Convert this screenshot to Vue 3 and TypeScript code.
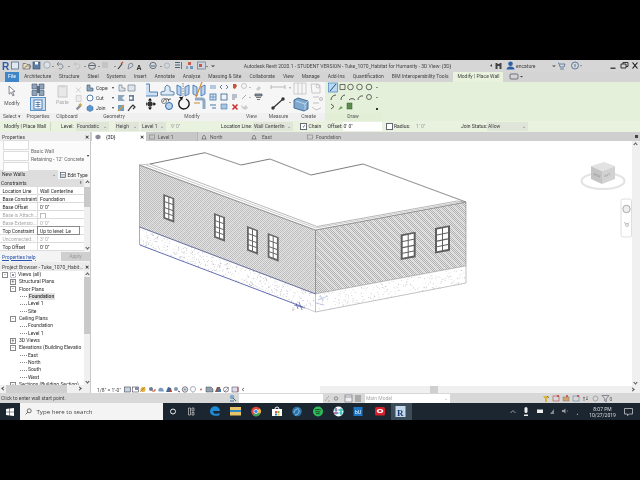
<script setup lang="ts">
const tabs = ['Architecture', 'Structure', 'Steel', 'Systems', 'Insert', 'Annotate', 'Analyze', 'Massing & Site', 'Collaborate', 'View', 'Manage', 'Add-Ins', 'Quantification', 'BIM Interoperability Tools'];

const docTabs = [
  { name: 'Level 1', cls: 'w-level' },
  { name: 'North', cls: 'w-north' },
  { name: 'East', cls: 'w-east' },
  { name: 'Foundation', cls: 'w-found' },
];

const propRows = [
  { label: 'Location Line', value: 'Wall Centerline' },
  { label: 'Base Constraint', value: 'Foundation' },
  { label: 'Base Offset', value: "0' 0\"" },
  { label: 'Base is Attach...', value: '', off: true, check: true },
  { label: 'Base Extensio...', value: "0' 0\"", off: true },
  { label: 'Top Constraint', value: 'Up to level: Le', active: true },
  { label: 'Unconnected...', value: "3' 0\"", off: true },
  { label: 'Top Offset', value: "0' 0\"" },
];

const tree = [
  { name: 'Views (all)', level: 0, box: '-', views: true },
  { name: 'Structural Plans', level: 1, box: '+' },
  { name: 'Floor Plans', level: 1, box: '-' },
  { name: 'Foundation', level: 2, current: true },
  { name: 'Level 1', level: 2 },
  { name: 'Site', level: 2 },
  { name: 'Ceiling Plans', level: 1, box: '-' },
  { name: 'Foundation', level: 2 },
  { name: 'Level 1', level: 2 },
  { name: '3D Views', level: 1, box: '+' },
  { name: 'Elevations (Building Elevatio', level: 1, box: '-' },
  { name: 'East', level: 2 },
  { name: 'North', level: 2 },
  { name: 'South', level: 2 },
  { name: 'West', level: 2 },
  { name: 'Sections (Building Section)', level: 1, box: '-' },
];

// fixed seed so the concrete stipple is the same on every load
let seed = 4711;
function rnd() {
  seed = (seed * 16807) % 2147483647;
  return seed / 2147483647;
}

const dots: { x: number; y: number; o: number }[] = [];
for (let i = 0; i < 420; i++) {
  const t = rnd();
  const v = rnd();
  dots.push({ x: 140 + t * 175, y: 227.5 + t * 67 + v * 17, o: 0.25 + rnd() * 0.6 });
}
for (let i = 0; i < 240; i++) {
  const t = rnd();
  const v = rnd();
  dots.push({ x: 316 + t * 150, y: 294.5 - t * 28 + v * 17, o: 0.2 + rnd() * 0.5 });
}

// light diagonal streaks over the brick hatch, clipped to each wall
const streaksL: number[] = [];
for (let c = 270; c < 620; c += 5) streaksL.push(c);
const streaksR: number[] = [];
for (let c = 0; c < 280; c += 8) streaksR.push(c);

const leftWindows = [
  { x: 163.3, y: 194 },
  { x: 214, y: 213 },
  { x: 247, y: 226 },
  { x: 267.7, y: 233 },
];
const rightWindows = [
  { x: 400.7, y: 234.5 },
  { x: 435, y: 228 },
];
</script>

<template>
  <div class="screen">
    <div class="letterbox"></div>
    <div class="revit">
      <!-- title bar -->
      <div class="titlebar">
        <svg class="qat" width="225" height="12" viewBox="0 60 225 12">
          <text x="2" y="69.5" class="logo">R</text>
          <rect x="11.5" y="62" width="7" height="7" fill="#dfe8f0" stroke="#59728c" stroke-width=".8" />
          <path d="M23 63.5h3l1 1h3v4.500h-7zM24 69l2-3h5l-2 3" fill="#e8dfb8" stroke="#667" stroke-width=".7" />
          <rect x="33" y="62" width="7" height="7" fill="#5f7ea3" stroke="#2f4c70" stroke-width=".6" />
          <rect x="35" y="62" width="3" height="2.500" fill="#fff" />
          <circle cx="47" cy="65" r="3.200" fill="#dfe3e8" stroke="#8a97a5" stroke-width=".7" />
          <path d="M52 66l1 1 1-1z M68 66l1 1 1-1z M84 66l1 1 1-1z M98 66l1 1 1-1zM114 66l1 1 1-1zM160 66l1 1 1-1z" fill="#444" />
          <path d="M57 64h3a2.500 2.500 0 1 1-1 4.500M57 64l2-2M57 64l2 2" fill="none" stroke="#6b7785" stroke-width=".8" />
          <path d="M74 64h3a2.500 2.500 0 1 1-1 4.500M74 64l2-2M74 64l2 2" fill="none" stroke="#bbb" stroke-width=".8" />
          <ellipse cx="92" cy="66" rx="3.500" ry="3.300" fill="none" stroke="#5b6570" stroke-width=".9" />
          <path d="M88.500 65.500h7" stroke="#5b6570" stroke-width="1" />
          <path d="M102 63h6M102 65h6M102 67h6" stroke="#aaa" stroke-width=".8" />
          <path d="M118 69l4-5" stroke="#333" stroke-width="1.100" /><path d="M121 64l2-2" stroke="#b8482f" stroke-width="1.200" />
          <path d="M128 69l1-5 3-1 1 3z" fill="none" stroke="#6e7b8a" stroke-width=".8" />
          <text x="136.500" y="69.500" class="qat-a">A</text>
          <circle cx="153" cy="65.500" r="3.200" fill="none" stroke="#66727f" stroke-width="1" /><rect x="150" y="65" width="6" height="2" fill="#8fa1b3" />
          <circle cx="167" cy="65.500" r="2.600" fill="none" stroke="#9fb0c2" stroke-width=".9" />
          <path d="M175 62.500h5M175 65h5M175 67.500h5" stroke="#49617b" stroke-width="1" /><path d="M181 62h1v7h-1z" fill="#b45a42" />
          <path d="M188 62h3v3h-3z" fill="#c95b48" /><path d="M190 66h3v3h-3z" fill="#6d98bf" /><path d="M186 66h2v3h-2z" fill="#90a4b6" />
          <rect x="197.500" y="62" width="8" height="7" fill="#ccd5de" stroke="#6a7886" stroke-width=".7" /><rect x="199" y="64" width="3" height="3" fill="#c35a4a" />
          <path d="M206 66l1 1 1-1zM211 65.500l2 1.500 2-1.500z" fill="#333" />
        </svg>
        <div class="title-text">Autodesk Revit 2020.1 - STUDENT VERSION - Tuke_1070_Habitat for Humanity - 3D View: {3D}</div>
        <svg class="title-right" width="150" height="12" viewBox="490 60 150 12">
          <path d="M490 65.500l2-1.500v3z" fill="#444" />
          <path d="M495.500 63h2v1h2v-1h2v6h-2v-3h-2v3h-2z" fill="#444" />
          <circle cx="510.500" cy="63.800" r="2.300" fill="#2d5fa8" /><path d="M506.500 69.500c0-4 8-4 8 0z" fill="#2d5fa8" />
          <text x="516" y="67.500" class="user">encature</text>
          <path d="M552 65.500l2 1.500 2-1.500zM580 65.500l1 1 1-1z" fill="#444" />
          <path d="M558 63h1l1 4h4l1-3h-5M560 69h4" fill="none" stroke="#4f6f96" stroke-width=".8" />
          <circle cx="575" cy="65.500" r="3.500" fill="none" stroke="#4f6f96" stroke-width=".9" /><path d="M575 64v3" stroke="#4f6f96" stroke-width=".9" />
          <path d="M610.500 68.200h5" stroke="#222" stroke-width="1.200" />
          <path d="M621 64h5v4h-5zM623 64v-1.500h5v4h-2" fill="none" stroke="#222" stroke-width=".9" />
          <path d="M632.500 62.500l5 6M637.500 62.500l-5 6" stroke="#111" stroke-width="1.100" />
        </svg>
      </div>

      <!-- ribbon tabs -->
      <div class="tabrow">
        <div class="file-tab">File</div>
        <span v-for="t in tabs" :key="t" class="tab">{{ t }}</span>
        <div class="ctx-tab">Modify | Place Wall</div>
        <svg width="14" height="9" viewBox="0 0 14 9" class="tab-extra">
          <rect x="1" y="2" width="8" height="5" rx="1" fill="none" stroke="#556" stroke-width=".8" />
          <path d="M11 4l1.500 1.500L14 4z" fill="#444" />
        </svg>
      </div>

      <!-- ribbon -->
      <div class="ribbon">
        <div class="panel w-select">
          <div class="panel-body col">
            <svg width="12" height="12" viewBox="0 0 12 12"><path d="M3 1l6 5.500-2.500.3 1.600 3.400-1.300.6-1.600-3.400-2 1.700z" fill="#fff" stroke="#667" stroke-width=".8" /></svg>
            <span class="big-label">Modify</span>
          </div>
          <div class="panel-label">Select ▾</div>
        </div>
        <div class="panel w-props">
          <div class="panel-body col">
            <svg width="14" height="13" viewBox="0 0 14 13">
              <path d="M1 1h5v5H1zM8 1h5v5H8zM1 7.500h5v5H1zM8 7.500h5v5H8z" fill="#90a4b8" stroke="#3e5670" stroke-width=".6" />
              <path d="M6 3h3v7H6z" fill="#586a7c" />
            </svg>
            <div class="prop-btn">
              <svg width="10" height="11" viewBox="0 0 10 11"><rect x="1" y="1" width="8" height="9" fill="#fff" stroke="#2f5f98" stroke-width=".8" /><path d="M2.500 3.500h5M2.500 5.500h5M2.500 7.500h5M5 2.500v6" stroke="#2f5f98" stroke-width=".7" /></svg>
            </div>
          </div>
          <div class="panel-label">Properties</div>
        </div>
        <div class="panel w-clip">
          <div class="panel-body row">
            <div class="col paste">
              <svg width="11" height="14" viewBox="0 0 11 14"><rect x="1" y="2" width="9" height="11" fill="#e8e8e8" stroke="#c8c8c8" /><rect x="3" y="1" width="5" height="2.500" fill="#d4d4d4" /></svg>
              <span class="big-label off">Paste</span>
            </div>
            <svg width="9" height="29" viewBox="0 0 9 29">
              <path d="M1 1l6 6M7 1l-6 6" stroke="#c8c8c8" /><rect x="1.500" y="11" width="6" height="7" fill="#eee" stroke="#ccc" />
              <path d="M1 27l5-5 2 2-5 5z" fill="#8a8f96" /><path d="M4 22l3-2 2 3-2 1z" fill="#c7a94f" />
            </svg>
          </div>
          <div class="panel-label">Clipboard</div>
        </div>
        <div class="panel w-geom">
          <div class="panel-body row">
            <div class="geo-list">
              <div class="geo-row"><svg width="8" height="8" viewBox="0 0 8 8"><path d="M1 1h3v3h3v3H1z" fill="#8fa6bf" stroke="#38506b" stroke-width=".6" /></svg><span>Cope</span><i>▾</i></div>
              <div class="geo-row"><svg width="8" height="8" viewBox="0 0 8 8"><rect x="1" y="1" width="6" height="6" rx="3" fill="#fff" stroke="#4d7fb3" /></svg><span>Cut</span><i>▾</i></div>
              <div class="geo-row"><svg width="8" height="8" viewBox="0 0 8 8"><path d="M1 3l3-2 3 2v3l-3 1.500L1 6z" fill="#5d96cc" stroke="#2f5f98" stroke-width=".5" /></svg><span>Join</span><i>▾</i></div>
            </div>
            <svg width="20" height="30" viewBox="115 82 20 30">
              <path d="M117 84h3v3h3v3h-6zM126 84h7v6h-7z" fill="#dfe5ea" stroke="#5b6e82" stroke-width=".6" />
              <path d="M116 94h7l-3 3 3 3h-7z" fill="#8fa6bf" /><path d="M127 94h5v6h-5z" fill="#6d8299" /><circle cx="129" cy="97" r="1.500" fill="#fff" />
              <path d="M116 104h6v6h-6z" fill="#6d9dc9" /><path d="M116 110l6-6" stroke="#d9a13b" stroke-width="1.200" /><path d="M126 110l3-4 2-2 2 2-2 2" fill="none" stroke="#333" stroke-width="1.200" />
            </svg>
          </div>
          <div class="panel-label">Geometry</div>
        </div>
        <div class="panel w-mod">
          <div class="panel-body">
            <svg width="92" height="30" viewBox="146 82 92 30">
              <path d="M145.500 84h4v8h8v4h-12z" fill="#cfe0f3" stroke="#2d6ab0" stroke-width=".8" />
              <path d="M161 95v-3l4-1v-4l2-2 3 2v4l4 1v3z" fill="#dfe9f3" stroke="#3c6f9f" stroke-width=".8" />
              <path d="M177 85l4 2v9l-4-2zM189 85l-4 2v9l4-2z" fill="#bcd3ea" stroke="#2d6ab0" stroke-width=".8" /><path d="M183 83v14" stroke="#333" stroke-width=".6" stroke-dasharray="1.500 1" />
              <path d="M193 85l4 2v9l-4-2zM205 85l-4 2v9l4-2z" fill="#bcd3ea" stroke="#2d6ab0" stroke-width=".8" /><path d="M196 97l6-15" stroke="#d98b2b" stroke-width="1.200" />
              <path d="M150 99v10M145 104h10" stroke="#111" stroke-width="1" />
              <path d="M150 98l2 2.500h-4zM150 110l2-2.500h-4zM144 104l2.500-2v4zM156 104l-2.500-2v4z" fill="#111" />
              <rect x="147.800" y="101.800" width="4.400" height="4.400" fill="#333" />
              <path d="M163 102a4 4 0 0 1 5-3M171 99l-3 .5 1 2" fill="none" stroke="#333" stroke-width=".8" />
              <circle cx="169" cy="106" r="3.500" fill="#bcd3ea" stroke="#2d6ab0" /><circle cx="164" cy="101" r="2.500" fill="none" stroke="#555" stroke-width=".7" />
              <path d="M186 99a5.200 5.200 0 1 1-5 .5" fill="none" stroke="#111" stroke-width="1.300" /><path d="M179 97l4 0-1 3.500z" fill="#111" />
              <path d="M195 99h7a2 2 0 0 1 2 2v8" fill="none" stroke="#8ea9c4" stroke-width="3" /><path d="M194 103h6" stroke="#c88c38" stroke-width="1" />
              <path d="M210 86h6M210 88h6" stroke="#6e9bc5" stroke-width="1.200" /><path d="M222 85l-2 2 2 2M226 85l2 2-2 2" fill="none" stroke="#5e7f9f" />
              <path d="M233 84h3l1 2-2 3-2-1z" fill="#c6553f" />
              <rect x="210" y="94" width="6" height="6" fill="#d5e4f3" stroke="#4678a8" stroke-width=".8" /><path d="M213 94v6M210 97h6" stroke="#4678a8" stroke-width=".6" />
              <rect x="221" y="94" width="6" height="6" fill="#eef3f8" stroke="#35618c" stroke-width=".8" />
              <path d="M232 95h5M232 97h5M232 99h3" stroke="#5d7084" stroke-width=".8" />
              <path d="M210 105h6M212 108h4" stroke="#4678a8" stroke-width="1.200" /><path d="M221 104h6v5h-6z" fill="#aac5df" stroke="#4678a8" stroke-width=".6" />
              <path d="M232.500 104.500l5 5M237.500 104.500l-5 5" stroke="#cf2b2b" stroke-width="1.500" />
            </svg>
          </div>
          <div class="panel-label">Modify</div>
        </div>
        <div class="panel w-view">
          <div class="panel-body">
            <svg width="27" height="30" viewBox="241 82 27 30">
              <circle cx="247" cy="86" r="2.500" fill="none" stroke="#bbb" stroke-width=".8" /><path d="M252 87l1 1 1-1z" fill="#888" />
              <path d="M259 89l3-3 2 2-3 3z" fill="#ccc" />
              <path d="M245 99l4-4" stroke="#aaa" stroke-width="1" /><path d="M252 97l1 1 1-1z" fill="#888" />
              <path d="M258 94h7v2h-7zM259 97.500h5M260 99.500h3" stroke="#555" stroke-width=".8" fill="#7d95ad" />
              <path d="M244 105l3 2 2-2 2 3-3 2-3-2z" fill="#ccc" />
            </svg>
          </div>
          <div class="panel-label">View</div>
        </div>
        <div class="panel w-meas">
          <div class="panel-body">
            <svg width="27" height="30" viewBox="265 82 27 30">
              <path d="M271 87h14M271 85v4M285 85v4" stroke="#aaa" stroke-width=".8" />
              <path d="M289 87.500l1 1 1-1zM289 102l1 1 1-1z" fill="#555" />
              <path d="M273 108l10-9" stroke="#333" stroke-width="1.200" /><circle cx="273" cy="108" r="1.700" fill="#333" /><circle cx="283" cy="99" r="1.700" fill="#333" />
            </svg>
          </div>
          <div class="panel-label">Measure</div>
        </div>
        <div class="panel w-create">
          <div class="panel-body">
            <svg width="33" height="30" viewBox="292 82 33 30">
              <path d="M294 83h12v11h-12zM298 83v11M302 83v11" fill="none" stroke="#c2c2c2" stroke-width=".8" />
              <path d="M311 84h6l3 3v6h-8z" fill="none" stroke="#bdbdbd" stroke-width=".8" /><circle cx="318" cy="86" r="2" fill="none" stroke="#bbb" stroke-width=".8" />
              <path d="M294 100l4-2 10 3v8l-4 2-10-3z" fill="#7fa8cf" stroke="#2a5886" stroke-width=".8" />
              <path d="M296 101l9 3v6M305 104l3-3" fill="none" stroke="#d9e7f3" stroke-width=".7" />
              <path d="M313 97h6M313 103h6M312 107l4 3 5-2" fill="none" stroke="#bbb" stroke-width=".9" /><circle cx="321" cy="99" r="1.500" fill="none" stroke="#bbb" />
            </svg>
          </div>
          <div class="panel-label">Create</div>
        </div>
        <div class="panel w-draw green">
          <div class="panel-body">
            <svg width="56" height="30" viewBox="325 82 56 30">
              <rect x="328.500" y="83" width="9" height="9" fill="#bcd9f4" stroke="#3f82c5" stroke-width=".7" />
              <path d="M330 91l6-7" stroke="#1f3f63" stroke-width=".9" />
              <path d="M340 84.500h5v5h-5z" fill="none" stroke="#333" stroke-width=".7" />
              <circle cx="350.500" cy="87" r="2.800" fill="none" stroke="#333" stroke-width=".7" />
              <circle cx="359.500" cy="87" r="2.800" fill="none" stroke="#333" stroke-width=".7" /><circle cx="369" cy="87" r="2.800" fill="none" stroke="#333" stroke-width=".7" />
              <path d="M376 87l1 1 1-1zM376 97l1 1 1-1z" fill="#333" />
              <path d="M331 100a5 5 0 0 1 5-5M341 100a5 5 0 0 1 4-5M349 100a4 4 0 0 1 6 0M358 100a4 4 0 0 1 5-4" fill="none" stroke="#333" stroke-width=".8" />
              <circle cx="369" cy="97" r="2.500" fill="none" stroke="#333" stroke-width=".7" />
              <path d="M331 104l3 2.500-3 2.500" fill="none" stroke="#333" stroke-width=".8" />
              <path d="M338 110l3-4 2 2z" fill="#6fa14f" /><rect x="347" y="103" width="5" height="6" fill="#5c8d4d" stroke="#2e5f2e" stroke-width=".5" />
              <path d="M376 108h2v2h-2z" fill="#333" />
            </svg>
          </div>
          <div class="panel-label">Draw</div>
        </div>
        <div class="green-rest"></div>
      </div>

      <!-- options bar -->
      <div class="optbar">
        <span class="o-mode">Modify | Place Wall</span>
        <span class="o-sep"></span>
        <span class="o-level">Level:</span>
        <span class="o-select s-found">Foundatic<i>⌄</i></span>
        <span class="o-select s-heigh">Heigh<i>⌄</i></span>
        <span class="o-select s-lvl">Level 1<i>⌄</i></span>
        <span class="o-off o-height">9' 0"</span>
        <span class="o-loc">Location Line:</span>
        <span class="o-select s-loc">Wall Centerlin<i>⌄</i></span>
        <span class="o-check c-chain">✓</span><span class="o-chain">Chain</span>
        <span class="o-offset">Offset:</span>
        <span class="o-input">0' 0"</span>
        <span class="o-check c-radius"></span><span class="o-radius">Radius:</span>
        <span class="o-off o-r">1' 0"</span>
        <span class="o-join">Join Status:</span>
        <span class="o-select s-allow">Allow<i>⌄</i></span>
      </div>

      <!-- main area -->
      <div class="work">
        <aside class="side">
          <div class="pane-head"><span>Properties</span><b>✕</b></div>
          <div class="type-sel">
            <div class="swatches"><span></span><span></span><span></span></div>
            <div class="type-name"><div>Basic Wall</div><div>Retaining - 12" Concrete</div></div>
            <i class="type-caret"></i>
          </div>
          <div class="new-row">
            <span class="new-sel">New Walls<i>⌄</i></span>
            <span class="edit-type">
              <svg width="6" height="6" viewBox="0 0 6 6"><rect x=".5" y=".5" width="5" height="5" fill="#fff" stroke="#456" stroke-width=".7" /><path d="M1 2.500h4M1 4h4" stroke="#456" stroke-width=".5" /></svg>
              Edit Type
            </span>
          </div>
          <div class="prop-wrap">
            <div class="prop-table">
              <div class="prop-head"><span>Constraints</span><em>⇞</em></div>
              <div v-for="r in propRows" :key="r.label" class="prop-row" :class="{ off: r.off, active: r.active }">
                <span class="p-l">{{ r.label }}</span>
                <span class="p-v"><i v-if="r.check" class="p-check"></i>{{ r.value }}</span>
              </div>
            </div>
            <div class="vscroll prop-scroll"><i class="up"></i><b></b><i class="down"></i></div>
          </div>
          <div class="help-row">
            <a>Properties help</a>
            <span class="apply">Apply</span>
          </div>
          <div class="pane-head"><span>Project Browser - Tuke_1070_Habit...</span><b>✕</b></div>
          <div class="browser">
            <div class="tree">
              <div v-for="(n, i) in tree" :key="i" class="node" :class="'lv' + n.level">
                <span v-if="n.box" class="box">{{ n.box }}</span>
                <span v-else class="leafline"></span>
                <svg v-if="n.views" width="6" height="6" viewBox="0 0 6 6" class="views-ico"><rect x=".5" y=".5" width="5" height="5" fill="none" stroke="#667" stroke-width=".6" stroke-dasharray="1 .7" /><circle cx="3" cy="3" r="1" fill="#667" /></svg>
                <span class="n-txt" :class="{ cur: n.current }">{{ n.name }}</span>
              </div>
            </div>
            <div class="vscroll tree-scroll"><i class="up"></i><b></b><i class="down"></i></div>
          </div>
          <div class="hscroll side-h"><i class="left"></i><b></b><i class="right"></i></div>
        </aside>

        <section class="doc">
          <div class="doctabs">
            <div class="doc-tab current">
              <svg width="6" height="6" viewBox="0 0 6 6"><path d="M3 .5l2.500 1.200v2.600L3 5.500.5 4.300V1.700z" fill="#889" /></svg>
              <span>{3D}</span><b>✕</b>
            </div>
            <div v-for="d in docTabs" :key="d.name" class="doc-tab" :class="d.cls">
              <svg width="6" height="6" viewBox="0 0 6 6">
                <rect v-if="d.name === 'Level 1' || d.name === 'Foundation'" x=".5" y="1" width="5" height="4" fill="none" stroke="#8a8a8a" stroke-width=".7" />
                <path v-else d="M.5 5h5M1.500 5V3l1.500-2 1.500 2v2" fill="none" stroke="#666" stroke-width=".7" />
              </svg>
              <span>{{ d.name }}</span>
            </div>
            <i class="tabs-menu"></i>
          </div>
          <div class="canvas-row">
            <div class="canvas">
              <svg class="model" width="541" height="245" viewBox="91 141 541 245">
                <defs>
                  <!-- pixel-aligned tile, no rotation: a rotated tile beats into wide dark bands -->
                  <pattern id="hatch-l" width="2" height="2" patternUnits="userSpaceOnUse">
                    <rect width="2" height="2" fill="#e2e2e2" />
                    <rect width="1" height="1" fill="#bcbcbc" />
                    <rect x="1" y="1" width="1" height="1" fill="#bcbcbc" />
                  </pattern>
                  <pattern id="hatch-r" width="2" height="2" patternUnits="userSpaceOnUse">
                    <rect width="2" height="2" fill="#e4e4e4" />
                    <rect width="1" height="1" fill="#b0b0b0" />
                    <rect x="1" y="1" width="1" height="1" fill="#b0b0b0" />
                  </pattern>
                  <clipPath id="clip-l"><path d="M139.500 165L315.500 230V294L139.500 227z" /></clipPath>
                  <clipPath id="clip-r"><path d="M315.500 230L466 202V266L315.500 294z" /></clipPath>
                  <g id="win-l">
                    <rect x="0" y="0" width="11" height="24.500" fill="#666" />
                    <rect x="1.800" y="1.500" width="3.200" height="5" fill="#fff" /><rect x="6" y="1.500" width="3.200" height="5" fill="#fff" />
                    <rect x="1.800" y="7.500" width="3.200" height="5" fill="#fff" /><rect x="6" y="7.500" width="3.200" height="5" fill="#fff" />
                    <rect x="1.800" y="13.500" width="3.200" height="4" fill="#fff" /><rect x="6" y="13.500" width="3.200" height="4" fill="#fff" />
                    <rect x="1.800" y="18.500" width="3.200" height="4" fill="#fff" /><rect x="6" y="18.500" width="3.200" height="4" fill="#fff" />
                  </g>
                  <g id="win-r">
                    <rect x="0" y="0" width="15" height="25.500" fill="#5f5f5f" />
                    <rect x="2" y="1.800" width="5" height="5" fill="#fff" /><rect x="8" y="1.800" width="5" height="5" fill="#fff" />
                    <rect x="2" y="7.800" width="5" height="5" fill="#fff" /><rect x="8" y="7.800" width="5" height="5" fill="#fff" />
                    <rect x="2" y="14" width="5" height="4.500" fill="#fff" /><rect x="8" y="14" width="5" height="4.500" fill="#fff" />
                    <rect x="2" y="19.500" width="5" height="4" fill="#fff" /><rect x="8" y="19.500" width="5" height="4" fill="#fff" />
                  </g>
                </defs>

                <!-- walls -->
                <path d="M139.500 165L315.500 230V294L139.500 227z" fill="url(#hatch-l)" />
                <g clip-path="url(#clip-l)">
                  <line v-for="c in streaksL" :key="c" :x1="c - 200" y1="300" :x2="c - 60" y2="160" stroke="#fff" stroke-width=".7" opacity=".3" />
                </g>
                <path d="M315.500 230L466 202V266L315.500 294z" fill="url(#hatch-r)" />
                <g clip-path="url(#clip-r)">
                  <line v-for="c in streaksR" :key="c" :x1="c + 230" y1="190" :x2="c + 340" y2="300" stroke="#fff" stroke-width="1.200" opacity=".42" />
                </g>
                <path d="M139.500 165L315.500 230V294L139.500 227zM315.500 230L466 202V266L315.500 294z" fill="none" stroke="#888" stroke-width=".6" />

                <!-- foundation -->
                <path d="M139.500 227L315.500 294V312L140 245zM315.500 294L466 266V283L315.500 312z" fill="#fff" />
                <rect v-for="(d, i) in dots" :key="i" :x="d.x" :y="d.y" width=".7" height=".7" fill="#778" :opacity="d.o" />
                <path d="M315.500 294V312L466 283V266" fill="none" stroke="#999" stroke-width=".6" />
                <path d="M139.500 227V245" stroke="#7b86b8" stroke-width=".7" />
                <path d="M139.500 227L315.500 294" stroke="#3c4a8f" stroke-width=".7" />
                <path d="M140 245L303 307" stroke="#3c4a9f" stroke-width=".8" />
                <path d="M303 307L315.500 312" stroke="#aab" stroke-width=".6" />
                <path d="M315.500 294L466 266" stroke="#aaa" stroke-width=".5" />

                <!-- roof -->
                <path d="M139.500 165L150 164L205 152.700L241 165L270 159L311 175L363 164L466 202L315.500 230z" fill="#fff" />
                <path d="M150 164L205 152.700M241 165L270 159M311 175L363 164" fill="none" stroke="#444" stroke-width=".7" />
                <path d="M205 152.700L241 165M270 159L311 175M363 164L466 202" fill="none" stroke="#999" stroke-width="1.200" />
                <path d="M139.500 165L315.500 230L466 202" fill="none" stroke="#777" stroke-width=".7" />
                <path d="M150 164L317 226.500L457 201" fill="none" stroke="#888" stroke-width=".6" />
                <path d="M146 165L316 228L462 201.500" fill="none" stroke="#aaa" stroke-width=".6" />
                <path d="M139.500 165L150 164M457 201L466 202" fill="none" stroke="#999" stroke-width=".6" />

                <!-- windows -->
                <use v-for="w in leftWindows" :key="w.x" href="#win-l" :transform="`matrix(1 .38 0 1 ${w.x} ${w.y})`" />
                <use v-for="w in rightWindows" :key="w.x" href="#win-r" :transform="`matrix(1 -.187 0 1 ${w.x} ${w.y})`" />

                <!-- wall sketch at the corner -->
                <path d="M294 305l11 3M299 302l3 8M296 303l2 6" stroke="#3c4a9f" stroke-width=".6" fill="none" />
                <path d="M292 310l3-1M293 307v4" stroke="#999" stroke-width=".4" fill="none" />
                <path d="M318 300l10-4M320 295l3 6M316 303l8 2" stroke="#a8b6dc" stroke-width=".7" fill="none" />

                <!-- view cube -->
                <ellipse cx="603" cy="181" rx="21.500" ry="8" fill="none" stroke="#e4e4e4" stroke-width="2.200" />
                <path d="M591 166l11 5v13l-11-5z" fill="#c4c4c4" />
                <path d="M602 171l13-5v13l-13 5z" fill="#d2d2d2" />
                <path d="M591 166l13-4 11 4-13 5z" fill="#e2e2e2" />
                <text x="593" y="176" class="cube-t" transform="rotate(22 596 176)">BACK</text>
                <text x="604" y="176" class="cube-t" transform="rotate(-20 608 176)">LEFT</text>

                <!-- navigation bar -->
                <rect x="621" y="199" width="10.500" height="38" rx="2" fill="#fff" stroke="#d5d5d5" stroke-width=".8" />
                <circle cx="626.500" cy="209" r="3.700" fill="#eee" stroke="#aaa" stroke-width="1" />
                <path d="M624 222l2 2M627 224.500l2-2" stroke="#999" stroke-width=".7" />
                <circle cx="627" cy="225" r="1.500" fill="none" stroke="#999" stroke-width=".6" />
              </svg>
            </div>
            <div class="vscroll main-v"><i class="up"></i><b></b><i class="down"></i></div>
          </div>
          <div class="viewbar">
            <span class="scale">1/8" = 1'-0"</span>
            <svg width="124" height="8" viewBox="122 385 124 8">
              <rect x="124.500" y="386" width="6" height="5" fill="#c7d3de" stroke="#445" stroke-width=".6" />
              <rect x="132.500" y="386" width="6" height="5" fill="#fff" stroke="#445" stroke-width=".6" /><rect x="135" y="386" width="3.500" height="3" fill="#88a" />
              <circle cx="143" cy="388.500" r="2.500" fill="#e1b23c" /><path d="M140 391l5-5" stroke="#a66a22" stroke-width=".6" />
              <circle cx="151" cy="388" r="2" fill="#6a7d92" /><path d="M152 390h3v-2" stroke="#c8492f" stroke-width="1" fill="none" />
              <path d="M158 389l2-2.500 3 1 1 3h-5z" fill="#7b9abb" />
              <path d="M166 391l2-5 3 1 1 4z" fill="#3c6a9a" /><rect x="169" y="388" width="2" height="3" fill="#b6453a" />
              <circle cx="176" cy="388" r="2" fill="#7c98b3" /><path d="M178 390l2 1" stroke="#405" stroke-width=".8" />
              <circle cx="185" cy="388.500" r="2.700" fill="none" stroke="#556" stroke-width=".8" /><rect x="183.500" y="387.500" width="3" height="2" fill="#8798a8" />
              <path d="M190.500 388a2.500 2.500 0 0 1 5 0c0 1.500-1 2-1.500 3h-2c-.5-1-1.500-1.500-1.500-3z" fill="none" stroke="#7d8a97" stroke-width=".7" />
              <circle cx="201" cy="388.500" r=".9" fill="#c55" />
              <path d="M206 386h5l2 2v3h-7z" fill="#8ea0b2" stroke="#444" stroke-width=".5" />
              <path d="M215 391l2-5h3l1 5z" fill="#8a5a4a" /><rect x="218" y="388" width="3" height="3" fill="#4d76a0" />
              <circle cx="226" cy="388.500" r="2.500" fill="none" stroke="#667" stroke-width=".8" /><path d="M224 391l5-5" stroke="#667" stroke-width=".6" />
              <rect x="232" y="386" width="6" height="5" fill="#dde" stroke="#556" stroke-width=".6" /><path d="M238 386v5" stroke="#a55" />
              <path d="M244 387l-2 1.500 2 1.500" stroke="#444" stroke-width=".7" fill="none" />
            </svg>
            <div class="hscroll main-h"><b></b><i class="right"></i></div>
          </div>
        </section>
      </div>

      <!-- status bar -->
      <div class="statusbar">
        <span class="st-msg">Click to enter wall start point.</span>
        <svg width="8" height="8" viewBox="0 0 8 8" class="st-ico"><circle cx="3" cy="3" r="2.200" fill="#7ea7c9" /><path d="M4 4l3 3M1 7h4" stroke="#3f6a8e" /></svg>
        <span class="st-box"></span>
        <svg width="40" height="9" viewBox="325 0 40 9" class="st-ico2">
          <path d="M326 7l4-5M329 7h2" stroke="#999" stroke-width=".7" />
          <circle cx="337" cy="4.500" r="1.700" fill="none" stroke="#666" stroke-width=".7" />
          <rect x="346" y="1" width="7" height="7" fill="#eee" stroke="#667" stroke-width=".6" /><path d="M346 3h7" stroke="#667" stroke-width=".6" />
          <rect x="356" y="1" width="6" height="7" fill="#aaa" />
        </svg>
        <span class="st-model">Main Model<i>⌄</i></span>
        <svg width="72" height="9" viewBox="543 0 72 9" class="st-right">
          <path d="M544 2h6l-2 3v3h-2V5z" fill="#d9b13f" /><path d="M548 2l2 2" stroke="#3a7d3a" stroke-width=".7" />
          <rect x="554" y="2" width="6" height="5" fill="none" stroke="#b86060" stroke-width=".7" /><path d="M558 1l2 2M560 1l-2 2" stroke="#c33" stroke-width=".7" />
          <rect x="564" y="3" width="6" height="4" fill="#d5a46a" stroke="#777" stroke-width=".5" /><path d="M567 1l2 2M569 1l-2 2" stroke="#c33" stroke-width=".7" />
          <rect x="574" y="2" width="6" height="5" fill="none" stroke="#7a93ab" stroke-width=".7" /><path d="M578 1l2 2M580 1l-2 2" stroke="#c33" stroke-width=".7" />
          <path d="M585 3v4M588 2v4M584 4l1-1 1 1M587 5l1 1 1-1" stroke="#555" stroke-width=".6" fill="none" />
          <circle cx="596.500" cy="4.500" r="2.500" fill="none" stroke="#999" stroke-width=".8" />
          <path d="M603 1.500h7l-2.700 3.200v3l-1.600-.8V4.700z" fill="none" stroke="#667" stroke-width=".7" />
          <text x="610.500" y="7" class="st-zero">0</text>
        </svg>
      </div>

      <!-- taskbar -->
      <div class="taskbar">
        <svg class="win" width="8" height="8" viewBox="0 0 8 8"><path d="M0 1.100l3.300-.5v3.100H0zM3.800.5L8 0v3.700H3.800zM0 4.200h3.300v3.200L0 6.900zM3.800 4.200H8V8l-4.200-.6z" fill="#fff" /></svg>
        <div class="search">
          <svg width="7" height="7" viewBox="0 0 7 7"><circle cx="4.200" cy="2.800" r="2" fill="none" stroke="#333" stroke-width=".7" /><path d="M2.800 4.200L.6 6.400" stroke="#333" stroke-width=".7" /></svg>
          <span>Type here to search</span>
        </div>
        <svg width="254" height="17" viewBox="163 403 254 17">
          <rect x="391" y="403" width="21" height="17" fill="#3d4c59" />
          <circle cx="173" cy="411.500" r="2.500" fill="none" stroke="#fff" stroke-width=".9" />
          <path d="M188.500 408h2v7h-2zM192 408h2v3h-2zM192 412.500h2v2.500h-2z" fill="none" stroke="#ccc" stroke-width=".7" />
          <path d="M210 411.500a5 5 0 0 1 10-.5h-7c0 3 4 3.500 6.500 2v2.200c-3.500 1.500-9.500 .5-9.500-3.700z" fill="#1f8ad6" />
          <rect x="230" y="407" width="11" height="8.500" fill="#e9c465" /><rect x="230" y="410" width="11" height="2" fill="#2c8ac9" />
          <circle cx="256" cy="411.500" r="4.800" fill="#e0483e" /><path d="M256 411.500l4.400 2a4.800 4.800 0 0 1-7.400 1.800z" fill="#3ba755" /><path d="M256 411.500l4.400 2A4.800 4.800 0 0 0 260 408.500z" fill="#f2c230" />
          <circle cx="256" cy="411.500" r="2.100" fill="#4285f4" stroke="#fff" stroke-width=".7" />
          <path d="M272 409h10v7h-10z" fill="#fff" /><path d="M275 409a2 2 0 0 1 4 0" fill="none" stroke="#fff" stroke-width="1" />
          <rect x="275" y="411" width="2" height="2" fill="#e8503a" /><rect x="277.500" y="411" width="2" height="2" fill="#73b043" /><rect x="275" y="413.500" width="2" height="2" fill="#1f8ad6" /><rect x="277.500" y="413.500" width="2" height="2" fill="#f2c230" />
          <circle cx="297" cy="411.500" r="4.800" fill="#2c73a8" /><path d="M294 413a4 4 0 0 1 5-4M295 415a4 4 0 0 0 4-5" fill="none" stroke="#a8d4f0" stroke-width=".8" />
          <circle cx="318" cy="411.500" r="5" fill="#2ebd59" /><path d="M315 410c2-.7 4-.7 6 .2M315.500 412c1.500-.5 3.300-.5 4.700.2M316 413.700c1.200-.3 2.500-.3 3.700.2" fill="none" stroke="#111" stroke-width=".7" />
          <circle cx="338.500" cy="411.500" r="5" fill="#fff" /><path d="M336 408v7M341 408v7M334 410h9M334 413h9" stroke="#36c5f0" stroke-width="1" /><path d="M336 408v3.500M334 413h4" stroke="#e01e5a" stroke-width="1" /><path d="M341 411v4M339 410h4" stroke="#2eb67d" stroke-width="1" />
          <rect x="353.500" y="407" width="9" height="9" fill="#1b74c4" /><text x="355" y="413.500" class="t-bu">bU</text>
          <rect x="375" y="407" width="10" height="8.500" rx="1.500" fill="#d7202a" /><ellipse cx="380" cy="411" rx="3.200" ry="2" fill="#fff" /><ellipse cx="380" cy="411" rx="1.600" ry="1" fill="#d7202a" />
          <rect x="395.500" y="406" width="10" height="11" fill="#c4d9ec" /><text x="397" y="415.500" class="t-r">R</text>
        </svg>
        <svg class="tray" width="70" height="17" viewBox="508 403 70 17">
          <path d="M510.500 413l2.500-2.500 2.500 2.500" fill="none" stroke="#ccc" stroke-width=".7" />
          <rect x="524.500" y="407" width="3" height="6" rx="1.500" fill="#eee" /><path d="M524 414.500h4v1.500h-4z" fill="#eee" />
          <rect x="537" y="409.500" width="6" height="3.500" fill="#eee" />
          <path d="M550 414l4-5v5z" fill="#888" />
          <path d="M562 410h1.500l2-1.500v5l-2-1.500H562z" fill="#999" /><path d="M567 410l1 1-1 1" stroke="#999" stroke-width=".4" fill="none" />
          <path d="M577 415l2-2.500M578 410l2-2 3 3-2 2z" fill="none" stroke="#ccc" stroke-width=".8" />
        </svg>
        <div class="clock"><span>8:07 PM</span><span>10/27/2019</span></div>
        <svg class="notif" width="9" height="8" viewBox="0 0 9 8"><path d="M.5.500h8v5.500h-3l-2 1.500V6h-3z" fill="none" stroke="#ddd" stroke-width=".7" /></svg>
      </div>
    </div>
    <div class="letterbox bottom"></div>
  </div>
</template>

<style>
html, body { margin: 0; background: #000; overflow: hidden; }
</style>

<style scoped>
.screen {
  width: 640px;
  height: 480px;
  background: #000;
  display: flex;
  flex-direction: column;
  overflow: hidden;
  font-family: Roboto, "Liberation Sans", sans-serif;
  font-size: 5px;
  color: #2c2c2c;
}
.letterbox { height: 60px; flex: none; background: #000; }
.revit { height: 360px; flex: none; display: flex; flex-direction: column; background: #f0f0f0; filter: blur(.32px); }

/* title bar */
.titlebar { height: 12px; flex: none; background: #d6d6d6; display: flex; align-items: center; }
.qat { flex: none; }
.logo { font: bold 10px "Liberation Sans", sans-serif; fill: #2a5ea8; }
.qat-a { font: bold 7px "Liberation Sans", sans-serif; fill: #333; }
.user { font-size: 5px; fill: #444; }
.title-text { width: 245px; text-align: center; white-space: nowrap; color: #444; flex: none; }
.title-right { flex: none; margin-left: 20px; }

/* tabs */
.tabrow { height: 9.500px; flex: none; background: #d4d4d4; display: flex; align-items: stretch; padding-left: 5px; gap: 8px; white-space: nowrap; color: #444; line-height: 9.500px; }
.file-tab { width: 14px; background: #3f86c9; color: #fff; text-align: center; margin-right: -3px; }
.tab { flex: none; }
.ctx-tab { background: #e8f2dd; width: 50px; text-align: center; margin-left: -3px; flex: none; }
.tab-extra { align-self: center; margin-left: -2px; }

/* ribbon */
.ribbon { height: 39px; flex: none; background: #f6f6f6; display: flex; }
.panel { display: flex; flex-direction: column; flex: none; }
.panel-body { flex: 1; min-height: 0; overflow: hidden; }
.panel-label { height: 8px; line-height: 7px; text-align: center; color: #555; background: #f0f0f0; white-space: nowrap; }
.col { display: flex; flex-direction: column; align-items: center; }
.row { display: flex; }
.w-select { width: 24px; }
.w-select .col { padding-top: 3px; gap: 3px; }
.big-label { color: #555; }
.big-label.off { color: #aaa; }
.w-props { width: 28px; }
.w-props .col { padding-top: 1.500px; gap: 1px; }
.prop-btn { width: 16px; height: 14px; background: #c9def5; border: 1px solid #5b93cd; box-sizing: border-box; display: flex; align-items: center; justify-content: center; }
.w-clip { width: 30px; }
.w-clip .row { padding: 2px 0 0 4px; gap: 6px; }
.paste { gap: 1px; }
.w-geom { width: 64px; }
.w-geom .row { padding: 1px 0 0 4px; gap: 3px; }
.geo-list { width: 28px; display: flex; flex-direction: column; }
.geo-row { height: 10px; display: flex; align-items: center; gap: 2px; color: #333; }
.geo-row i { font-style: normal; font-size: 4px; margin-left: auto; }
.w-mod { width: 92px; }
.w-view { width: 27px; }
.w-meas { width: 27px; }
.w-create { width: 33px; }
.w-draw { width: 56px; }
.green .panel-body, .green-rest { background: #e4f0d9; }
.green .panel-label { background: #e2eed6; }
.green-rest { flex: 1; }

/* options bar */
.optbar { height: 11.500px; flex: none; background: #e9f1df; display: flex; align-items: center; white-space: nowrap; color: #333; }
.optbar > span { flex: none; }
.o-mode { width: 50px; padding-left: 4px; box-sizing: border-box; }
.o-sep { width: 1px; height: 9px; background: #cfd8c6; margin-right: 6px; }
.o-level { width: 15px; margin-left: 4px; }
.o-select { height: 9px; line-height: 9px; background: #dfe5d8; padding-left: 1px; box-sizing: border-box; display: flex; justify-content: space-between; color: #444; }
.o-select i { font-style: normal; margin-right: 2px; color: #777; }
.s-found { width: 33px; }
.s-heigh { width: 24px; margin-left: 6px; }
.s-lvl { width: 25px; margin-left: 2px; }
.o-off { color: #9a9a9a; }
.o-height { width: 40px; margin-left: 5px; }
.o-loc { width: 32px; margin-left: 10px; }
.s-loc { width: 40px; }
.o-check { width: 5px; height: 5px; line-height: 5px; font-size: 5px; border: .7px solid #667; background: #fff; text-align: center; box-sizing: content-box; overflow: hidden; }
.c-chain { margin-left: 7px; }
.o-chain { width: 16px; margin-left: 1.500px; }
.o-offset { width: 15px; margin-left: 3px; }
.o-input { width: 39px; height: 9px; line-height: 9px; background: #fff; padding-left: 1px; box-sizing: border-box; }
.c-radius { margin-left: 4px; }
.o-radius { width: 21px; margin-left: 1.500px; }
.o-r { width: 45px; margin-left: 1px; }
.o-join { width: 26px; }
.s-allow { width: 41px; }

/* work area */
.work { flex: 1; min-height: 0; display: flex; }
.side { width: 91px; flex: none; display: flex; flex-direction: column; background: #f2f2f2; border-right: 1px solid #c9c9c9; box-sizing: border-box; white-space: nowrap; }
.pane-head { height: 9px; flex: none; display: flex; justify-content: space-between; align-items: center; padding: 0 1px 0 2px; background: #ececec; color: #444; }
.pane-head b { font-size: 5px; color: #222; }
.type-sel { height: 29px; flex: none; display: flex; align-items: center; background: #fbfbfb; position: relative; }
.swatches { width: 26px; margin-left: 3px; display: flex; flex-direction: column; gap: 1px; flex: none; }
.swatches span { height: 8px; background: #fff; border: .5px solid #ddd; }
.type-name { margin-left: 2px; color: #666; line-height: 7.200px; }
.type-caret { position: absolute; right: 1px; top: 14px; border: 1.500px solid transparent; border-top: 2px solid #222; }
.new-row { height: 9px; flex: none; display: flex; align-items: center; background: #f6f6f6; }
.new-sel { width: 58px; height: 9px; line-height: 9px; background: #dddddd; padding-left: 2px; box-sizing: border-box; display: flex; justify-content: space-between; color: #333; }
.new-sel i { font-style: normal; margin-right: 2px; color: #666; }
.edit-type { margin-left: 2px; display: flex; align-items: center; gap: 1.500px; }
.prop-wrap { height: 72px; flex: none; display: flex; overflow: hidden; }
.prop-table { flex: 1; min-width: 0; background: #fff; }
.prop-head { height: 8px; background: #dedede; line-height: 8px; padding: 0 2px 0 1px; display: flex; justify-content: space-between; color: #333; }
.prop-head em { font-style: normal; color: #555; font-size: 4px; }
.prop-row { height: 8px; line-height: 8px; display: grid; grid-template-columns: 38px 1fr; border-bottom: .5px solid #dcdcdc; box-sizing: border-box; padding-right: 5px; }
.p-l { padding-left: 2.500px; border-right: .5px solid #dcdcdc; overflow: hidden; letter-spacing: -.015em; }
.p-v { padding-left: 2px; overflow: hidden; }
.p-check { display: inline-block; width: 4px; height: 4px; border: .5px solid #bbb; margin-top: 1.500px; }
.prop-row.off { color: #aaa; }
.prop-row.active .p-v { outline: .7px solid #8a8a8a; outline-offset: -.7px; }
.vscroll { width: 6px; flex: none; background: #f0f0f0; display: flex; flex-direction: column; }
.vscroll i { height: 5px; flex: none; display: block; position: relative; }
.vscroll i::after { content: ""; position: absolute; left: 1.500px; width: 2px; height: 2px; border-left: .6px solid #555; border-top: .6px solid #555; transform: rotate(45deg); top: 1.500px; }
.vscroll i.down::after { transform: rotate(225deg); top: 0; }
.vscroll b { display: block; background: #c9c9c9; }
.vscroll i.down { margin-top: auto; }
.prop-scroll b { height: 20px; margin-top: 3px; }
.help-row { height: 11px; flex: none; display: flex; align-items: center; justify-content: space-between; background: #f4f4f4; }
.help-row a { color: #2a55b0; text-decoration: underline; padding-left: 2px; }
.apply { width: 29px; height: 9px; line-height: 9px; text-align: center; background: #cfcfcf; color: #9a9a9a; }
.browser { height: 114px; flex: none; display: flex; overflow: hidden; background: #fff; }
.tree { flex: 1; min-width: 0; overflow: hidden; padding-top: 0; }
.node { height: 7.350px; line-height: 7.350px; display: flex; align-items: center; }
.box { width: 4px; height: 4px; line-height: 3.500px; font-size: 5px; text-align: center; border: .5px solid #888; background: #fff; color: #444; flex: none; }
.leafline { width: 7px; border-top: .5px dotted #888; flex: none; margin-right: 1px; }
.lv0 { padding-left: 2px; }
.lv0 .views-ico { margin: 0 2px 0 2px; }
.lv1 { padding-left: 10px; }
.lv1 .n-txt { margin-left: 3px; }
.lv2 { padding-left: 20px; }
.cur { background: #e2e2e2; font-weight: 500; padding: 0 1px; }
.tree-scroll b { height: 57px; margin-top: 1px; }
.hscroll { height: 7px; flex: none; background: #f0f0f0; display: flex; align-items: stretch; }
.hscroll b { display: block; background: #cfcfcf; }
.hscroll i { width: 6px; flex: none; position: relative; display: block; }
.hscroll i::after { content: ""; position: absolute; top: 2px; left: 2px; width: 2px; height: 2px; border-left: .6px solid #444; border-bottom: .6px solid #444; transform: rotate(45deg); }
.hscroll i.right::after { transform: rotate(225deg); left: 1px; }
.side-h { padding-right: 6px; height: 8px; }
.side-h b { width: 61px; }
.side-h i.right { margin-left: 10px; }

.doc { flex: 1; min-width: 0; display: flex; flex-direction: column; background: #fff; }
.doctabs { height: 9px; flex: none; display: flex; background: #cfcfcf; position: relative; padding-left: 1px; }
.doc-tab { display: flex; align-items: center; gap: 3px; padding-left: 3px; box-sizing: border-box; color: #555; white-space: nowrap; flex: none; }
.doc-tab.current { width: 54px; background: #fff; color: #222; }
.doc-tab.current span { margin-left: 2px; }
.doc-tab.current b { margin-left: auto; margin-right: 2px; font-size: 5px; }
.w-level { width: 52px; background: #c7c7c7; border-right: .5px solid #b5b5b5; }
.w-north { width: 50px; }
.w-east { width: 56px; }
.w-east span { margin-left: 2px; }
.w-found { width: 60px; }
.tabs-menu { position: absolute; right: 2px; top: 3px; width: 3px; height: 3px; background: #444; }
.canvas-row { flex: 1; min-height: 0; display: flex; }
.canvas { flex: 1; min-width: 0; background: #fff; overflow: hidden; }
.model { display: block; }
.cube-t { font-size: 2.800px; fill: #888; }
.main-v { width: 8px; }
.main-v b { display: none; }
.viewbar { height: 7px; flex: none; display: flex; align-items: center; background: #fff; white-space: nowrap; }
.scale { width: 25px; padding-left: 6px; box-sizing: content-box; color: #444; flex: none; }
.main-h { flex: 1; margin-left: 74px; padding-left: 110px; }
.main-h b { width: 8px; }
.main-h i.right { margin-left: auto; margin-right: 4px; }

/* status bar */
.statusbar { height: 10px; flex: none; background: #d8d8d8; display: flex; align-items: center; white-space: nowrap; color: #444; }
.st-msg { width: 228px; padding-left: 1px; flex: none; box-sizing: content-box; }
.st-ico { flex: none; }
.st-box { width: 84px; height: 9px; background: #fff; margin-left: 2px; flex: none; }
.st-ico2 { flex: none; margin-left: 1px; }
.st-model { width: 85px; height: 9px; line-height: 9px; background: #fff; color: #aaa; display: flex; justify-content: space-between; padding-left: 1px; box-sizing: border-box; flex: none; margin-left: 1px; }
.st-model i { font-style: normal; margin-right: 2px; }
.st-right { margin-left: 92px; flex: none; }
.st-zero { font-size: 5px; fill: #555; }

/* windows taskbar */
.taskbar { height: 17px; flex: none; background: #1b2630; display: flex; align-items: center; color: #eee; }
.win { margin: 0 6px 0 6px; flex: none; }
.search { width: 143px; height: 17px; background: #f4f4f4; display: flex; align-items: center; color: #444; font-size: 6.100px; padding-left: 5px; box-sizing: border-box; gap: 4.500px; flex: none; font-family: "Open Sans", Roboto, sans-serif; }
.t-bu { font-size: 5px; fill: #fff; }
.t-r { font: bold 9px "Liberation Serif", serif; fill: #1d3f73; }
.tray { margin-left: 91px; flex: none; }
.clock { width: 25px; display: flex; flex-direction: column; align-items: center; line-height: 6px; color: #ddd; flex: none; margin-left: 12px; white-space: nowrap; }
.notif { margin-left: 9px; flex: none; }
</style>
